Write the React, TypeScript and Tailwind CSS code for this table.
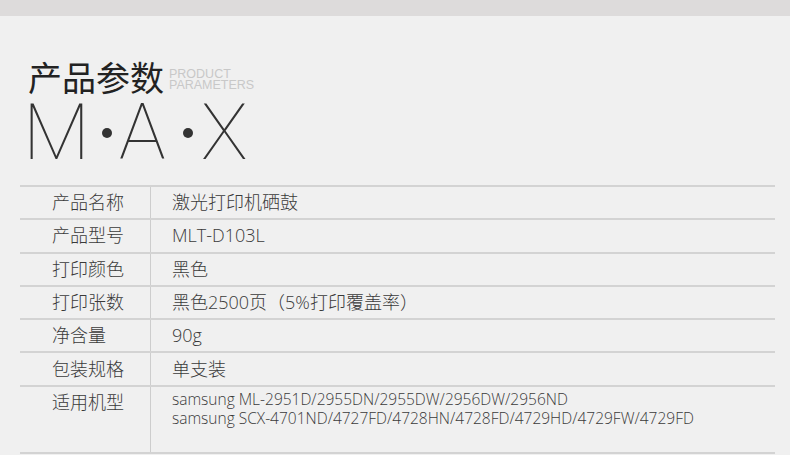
const ROWS: { label: string; value: string[] }[] = [
  { label: '产品名称', value: ['激光打印机硒鼓'] },
  { label: '产品型号', value: ['MLT-D103L'] },
  { label: '打印颜色', value: ['黑色'] },
  { label: '打印张数', value: ['黑色2500页（5%打印覆盖率）'] },
  { label: '净含量', value: ['90g'] },
  { label: '包装规格', value: ['单支装'] },
];

const MODELS = [
  'samsung ML-2951D/2955DN/2955DW/2956DW/2956ND',
  'samsung SCX-4701ND/4727FD/4728HN/4728FD/4729HD/4729FW/4729FD',
];

const cjk = { fontFamily: '"Open Sans", "Noto Sans CJK SC", sans-serif' };

export default function App() {
  return (
    <div className="w-[790px] h-[455px] bg-[#f0f0f0] overflow-hidden">
      <div className="h-[16px] bg-[#dddbdb]" />

      <div className="pl-[28px] pt-[34px]">
        <div className="flex items-end h-[44px]">
          <h1
            className="text-[34px] leading-none font-normal text-[#222]"
            style={{ fontFamily: '"Noto Sans CJK SC", sans-serif' }}
          >
            产品参数
          </h1>
          <div
            className="ml-[5px] mb-[3px] text-[12.5px] leading-[11px] text-[#c8c8c8]"
            style={{ fontFamily: '"Liberation Sans", Arial, sans-serif' }}
          >
            <div>PRODUCT</div>
            <div>PARAMETERS</div>
          </div>
        </div>
        <div
          className="mt-[6px] -ml-[5px] flex items-center h-[66px] text-[#333] text-[78px] leading-none font-thin"
          style={{ fontFamily: 'Roboto, sans-serif' }}
        >
          <span className="w-[56px]">M</span>
          <span className="ml-[23px] w-[10px] h-[10px] rounded-full bg-[#333]" />
          <span className="ml-[7px] w-[48px]">A</span>
          <span className="ml-[16px] w-[10px] h-[10px] rounded-full bg-[#333]" />
          <span className="ml-[8px]">X</span>
        </div>
      </div>

      <div className="mx-[20px] w-[755px] mt-[19px] border-t-2 border-[#d3d3d3]" style={cjk}>
        {ROWS.map((r) => (
          <div key={r.label} className="flex h-[33.3px] border-b-2 border-[#d3d3d3] text-[#3a3a3a]">
            <div className="w-[131px] flex items-center pl-[32px] text-[18px] font-light border-r border-[#cdcdcd]">
              {r.label}
            </div>
            <div className="flex items-center pl-[21px] text-[18px] font-light">{r.value[0]}</div>
          </div>
        ))}
        <div className="flex h-[67px] border-b-2 border-[#d3d3d3] text-[#3a3a3a]">
          <div className="w-[131px] h-full border-r border-[#cdcdcd]">
            <div className="h-[32px] flex items-center pl-[32px] text-[18px] font-light">适用机型</div>
          </div>
          <div className="pl-[21px] pt-[3px] text-[15.5px] leading-[19px] font-light">
            {MODELS.map((m) => (
              <div key={m}>{m}</div>
            ))}
          </div>
        </div>
      </div>
    </div>
  );
}
